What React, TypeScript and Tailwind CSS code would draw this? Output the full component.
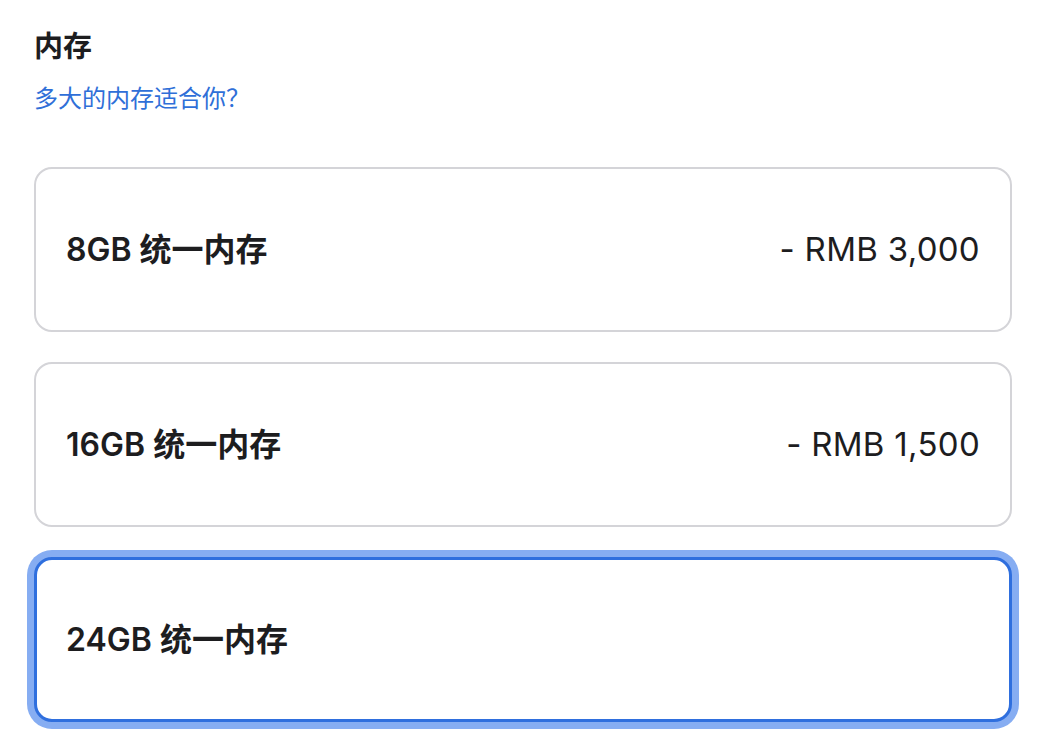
import React, { useState } from 'react';

const options = [
  { id: '8gb', label: '8GB 统一内存', price: '- RMB 3,000' },
  { id: '16gb', label: '16GB 统一内存', price: '- RMB 1,500' },
  { id: '24gb', label: '24GB 统一内存', price: '' },
];

export default function App() {
  const [selected, setSelected] = useState('24gb');

  return (
    <div
      className="w-[1060px] h-[752px] bg-white overflow-hidden pl-[34px] pr-[48px] pt-[28px] text-[#1d1d1f]"
      style={{ fontFamily: 'Inter, "Noto Sans CJK SC", sans-serif' }}
    >
      <h2 className="text-[29px] leading-[38px] font-bold">内存</h2>
      <a className="block mt-[16px] text-[24px] leading-[33px] text-[#2f6fd8]">多大的内存适合你？</a>

      <div className="mt-[52px] flex flex-col gap-[30px]">
        {options.map((o) => (
          <button
            key={o.id}
            onClick={() => setSelected(o.id)}
            className={`h-[165px] w-full rounded-[18px] bg-white flex items-center justify-between text-left ${
              selected === o.id
                ? 'border-[3px] border-[#2f6fde] ring-[7px] ring-[#86adf2] px-[29px]'
                : 'border-2 border-[#d4d4d8] px-[30px]'
            }`}
          >
            <span className="text-[32px] font-semibold">{o.label}</span>
            <span className="text-[33px] font-normal tracking-[0.3px]">{o.price}</span>
          </button>
        ))}
      </div>
    </div>
  );
}
